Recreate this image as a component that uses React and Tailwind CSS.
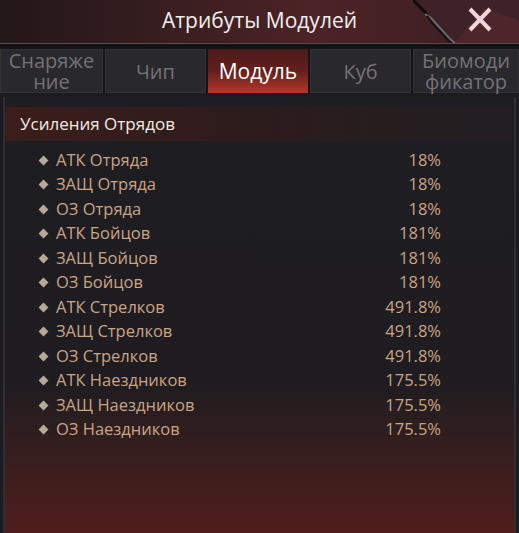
import React from 'react';

const tabs = [
  { label: ['Снаряже', 'ние'], w: 'w-[103px]' },
  { label: ['Чип'], w: 'w-[101px]' },
  { label: ['Модуль'], w: 'w-[100px]', active: true },
  { label: ['Куб'], w: 'w-[101px]' },
  { label: ['Биомоди', 'фикатор'], w: 'flex-1' },
];

const rows = [
  ['АТК Отряда', '18%'],
  ['ЗАЩ Отряда', '18%'],
  ['ОЗ Отряда', '18%'],
  ['АТК Бойцов', '181%'],
  ['ЗАЩ Бойцов', '181%'],
  ['ОЗ Бойцов', '181%'],
  ['АТК Стрелков', '491.8%'],
  ['ЗАЩ Стрелков', '491.8%'],
  ['ОЗ Стрелков', '491.8%'],
  ['АТК Наездников', '175.5%'],
  ['ЗАЩ Наездников', '175.5%'],
  ['ОЗ Наездников', '175.5%'],
];

const App = () => {
  return (
    <div
      className="w-[519px] h-[533px] overflow-hidden flex flex-col bg-[#1c1b1f]"
      style={{ fontFamily: '"Open Sans", "Noto Sans", sans-serif' }}
    >
      {/* Title bar */}
      <div className="relative h-[47px] shrink-0 flex flex-col">
        <div className="relative h-[43px] flex items-center justify-center bg-gradient-to-r from-[#221719] via-[#4c2326] via-60% to-[#3a1e21]">
          <span className="text-[21px] text-[#f2eeee] -mt-[2px]">Атрибуты Модулей</span>
          <svg className="absolute right-0 top-0" width="106" height="43" viewBox="0 0 106 43">
            <polygon points="0,0 106,0 106,43 42,43" fill="#3f2227" />
            <polygon points="42,43 106,43 106,20 70,8" fill="#5a2a2c" opacity="0.5" />
            <polyline points="0,0 14,14" fill="none" stroke="#0e0c0e" strokeWidth="3" />
            <polyline points="12,14 18,18 36,38 42,43" fill="none" stroke="#6c676b" strokeWidth="2" />
            <polyline points="14,16 20,24 38,43" fill="none" stroke="#141214" strokeWidth="2" />
            <path d="M57 9 L77 30 M77 9 L57 30" stroke="#f2d4dc" strokeWidth="4" />
          </svg>
        </div>
        <div className="h-[1px] bg-[#5b4c4f]" />
        <div className="flex-1 bg-[#121113]" />
      </div>

      {/* Tabs */}
      <div className="h-[46px] shrink-0 flex gap-[2px] pt-[2px] bg-[#141315]">
        {tabs.map((t, i) => (
          <div
            key={i}
            className={
              t.active
                ? `${t.w} shrink-0 flex flex-col items-center justify-center text-[21px] text-white bg-gradient-to-b from-[#4a1a1b] via-[#64201d] to-[#b5372a]`
                : `${t.w} shrink-0 flex flex-col items-center justify-center text-[20px] text-[#737276] bg-[#29282c] border border-[#333236]`
            }
          >
            {t.label.map((l) => (
              <div key={l} className="h-[21px] leading-[21px] overflow-visible">
                {l}
              </div>
            ))}
          </div>
        ))}
      </div>

      {/* Content panel */}
      <div className="flex-1 mt-[4px] mx-[3px] border-x-2 border-[#2f2e32] bg-gradient-to-b from-[#1e1d22] via-[#1e1c20] via-65% to-[#4f1d1b] pt-[10px]">
        <div className="h-[34px] flex items-center pl-[15px] bg-gradient-to-r from-[#3b1d1b] via-[#2c1c1c] to-[#211e22] text-[17px] text-[#f0eae6]">
          Усиления Отрядов
        </div>
        <div className="pt-[7px] pl-[35px] pr-[73px]">
          {rows.map(([name, val]) => (
            <div key={name} className="h-[24.5px] flex items-center text-[16.5px] text-[#caa485]">
              <span className="w-[7px] h-[7px] rotate-45 bg-[#b8a89a] mr-[9px]" />
              <span className="flex-1">{name}</span>
              <span>{val}</span>
            </div>
          ))}
        </div>
      </div>
    </div>
  );
};

export default App;
